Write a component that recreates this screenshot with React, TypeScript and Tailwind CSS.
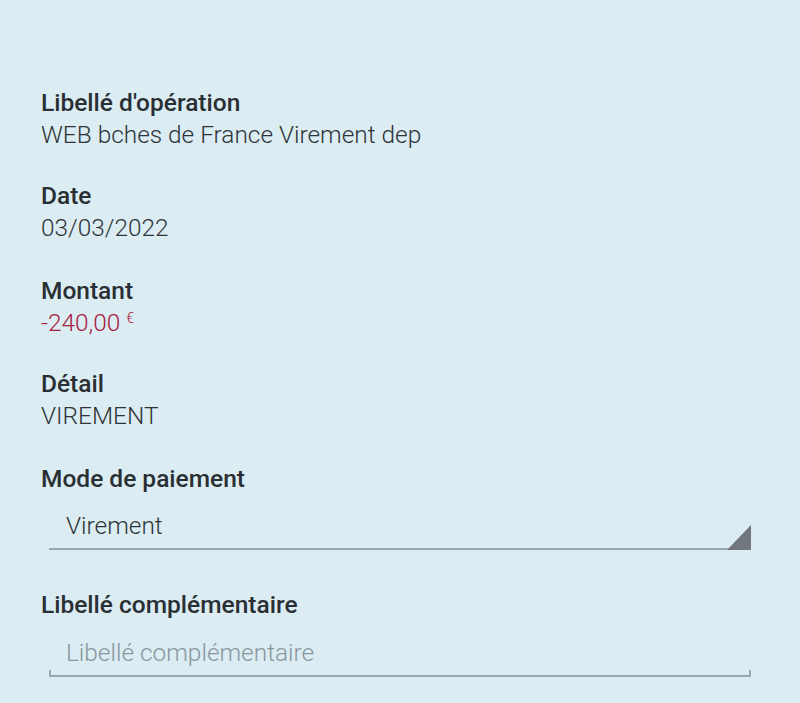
import React from "react";

function Field({ label, children, className = "" }: { label: string; children: React.ReactNode; className?: string }) {
  return (
    <div className={className}>
      <div className="text-[24.5px] leading-[32px] font-medium text-[#2a2f33]">{label}</div>
      {children}
    </div>
  );
}

export default function App() {
  return (
    <div
      className="w-[800px] h-[703px] bg-[#dbecf3] pl-[41px] pt-[87px] overflow-hidden"
      style={{ fontFamily: "Roboto, 'Noto Sans', sans-serif" }}
    >
      <Field label="Libellé d'opération">
        <div className="text-[24.4px] leading-[32px] font-light text-[#2e3438]">WEB bches de France Virement dep</div>
      </Field>
      <Field label="Date" className="mt-[29px]">
        <div className="text-[24.4px] leading-[32px] font-light text-[#2e3438]">03/03/2022</div>
      </Field>
      <Field label="Montant" className="mt-[31px]">
        <div className="h-[32px] text-[24.4px] leading-[32px] font-light text-[#a8203f]">
          -240,00 <span className="text-[14px] leading-none align-[8px]">€</span>
        </div>
      </Field>
      <Field label="Détail" className="mt-[29px]">
        <div className="text-[24.4px] leading-[32px] font-light text-[#2e3438]">VIREMENT</div>
      </Field>
      <Field label="Mode de paiement" className="mt-[31px]">
        <div className="relative ml-[8px] mr-[49px] mt-[15px] pb-[6px] border-b-2 border-[#98a8b0]">
          <div className="pl-[17px] text-[24.4px] leading-[32px] font-light text-[#2e3438]">Virement</div>
          <svg className="absolute right-0 bottom-[-2px]" width="24" height="25" viewBox="0 0 24 25">
            <polygon points="24,0 24,25 0,25" fill="#72777b" />
          </svg>
        </div>
      </Field>
      <Field label="Libellé complémentaire" className="mt-[39px]">
        <div className="relative ml-[8px] mr-[49px] mt-[16px] pb-[6px] border-b-2 border-[#98a8b0]">
          <div className="pl-[17px] text-[24.4px] leading-[32px] font-light text-[#8a979e]">Libellé complémentaire</div>
          <div className="absolute left-0 bottom-0 w-[2px] h-[5px] bg-[#98a8b0]" />
          <div className="absolute right-0 bottom-0 w-[2px] h-[5px] bg-[#98a8b0]" />
        </div>
      </Field>
    </div>
  );
}
